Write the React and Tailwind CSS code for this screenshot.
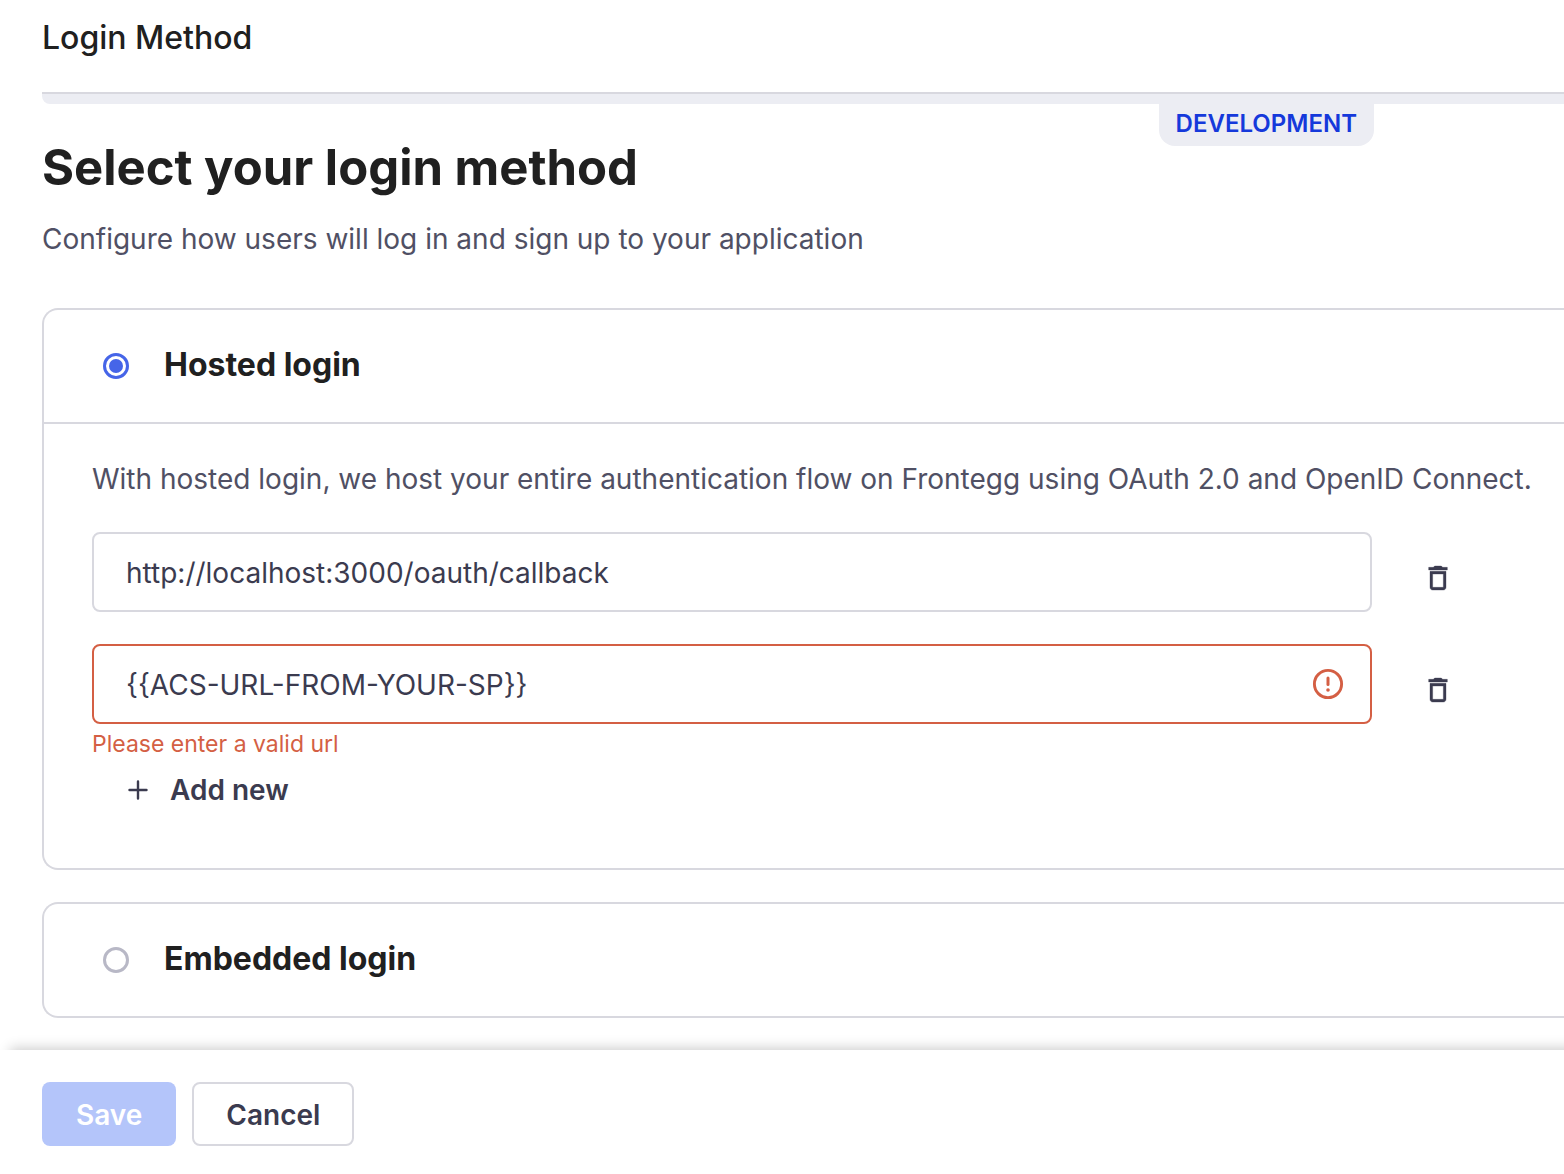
import React, { useState } from "react";

function TrashIcon() {
  return (
    <svg className="size-8" viewBox="0 0 24 24" fill="currentColor" stroke="currentColor" strokeWidth="0.25" aria-hidden="true">
      <path d="M16 9v10H8V9h8m-1.5-6h-5l-1 1H5v2h14V4h-3.5l-1-1zM18 7H6v12c0 1.1.9 2 2 2h8c1.1 0 2-.9 2-2V7z" />
    </svg>
  );
}

function AlertIcon() {
  return (
    <svg className="size-8" viewBox="0 0 32 32" fill="none" stroke="currentColor" aria-hidden="true">
      <circle cx="16" cy="16" r="13.6" strokeWidth="2.9" />
      <path d="M16 10v6.4" strokeWidth="3" strokeLinecap="round" />
      <circle cx="16" cy="22" r="1.8" fill="currentColor" stroke="none" />
    </svg>
  );
}

function PlusIcon() {
  return (
    <svg className="size-5" viewBox="0 0 20 20" fill="none" stroke="currentColor" aria-hidden="true">
      <path d="M10 1.5v17M1.5 10h17" strokeWidth="2.4" strokeLinecap="round" />
    </svg>
  );
}

function MethodCard({ value, label, selected, onSelect, children }) {
  return (
    <section className="rounded-l-2xl border-2 border-r-0 border-[#d8d8df]">
      <label className="flex h-28 items-center gap-[35px] pl-[59px]">
        <input
          type="radio"
          name="login-method"
          value={value}
          checked={selected}
          onChange={() => onSelect(value)}
          className="size-[26px] appearance-none rounded-full border-[3px] border-[#b8b8c6] bg-clip-content p-[3px] checked:border-[#4665e8] checked:bg-[#4665e8]"
        />
        <span className="pb-0.5 text-[32px] leading-10 font-bold text-[#202020]">{label}</span>
      </label>
      {children}
    </section>
  );
}

function UrlRow({ label, value, onChange, error }) {
  return (
    <div>
      <div className="flex items-center pr-[94px]">
        <div className="relative flex-1">
          <input
            type="text"
            aria-label={label}
            aria-invalid={Boolean(error)}
            value={value}
            onChange={(e) => onChange(e.target.value)}
            className={
              "h-20 w-full rounded-lg border-2 bg-white px-8 pt-0.5 text-[28px] text-[#3b3b4f] outline-none " +
              (error ? "border-[#d45f44]" : "border-[#d8d8df]")
            }
          />
          {error && (
            <span className="absolute inset-y-0 right-7 flex items-center text-[#d45f44]">
              <AlertIcon />
            </span>
          )}
        </div>
        <button
          type="button"
          aria-label="Delete URL"
          className="ml-[34px] flex h-20 w-16 items-center justify-center pt-3 text-[#3b3b4f]"
        >
          <TrashIcon />
        </button>
      </div>
      {error && <p className="pt-0.5 text-[23px] leading-9 text-[#d45f44]">{error}</p>}
    </div>
  );
}

export default function App() {
  const [method, setMethod] = useState("hosted");
  const [first, setFirst] = useState("http://localhost:3000/oauth/callback");
  const [second, setSecond] = useState("{{ACS-URL-FROM-YOUR-SP}}");

  return (
    <div className="flex min-h-screen flex-col overflow-x-hidden bg-white font-[Inter,sans-serif] text-[#202020]">
      <main className="flex-1 pl-[42px]">
        <header className="pt-[18px] pb-[34px]">
          <p className="text-[32px] leading-10 font-medium">Login Method</p>
        </header>
        <div className="relative h-3 rounded-bl-lg border-t-2 border-[#d8d8df] bg-[#ecedf3]">
          <span className="absolute top-0 right-[190px] rounded-b-2xl bg-[#ecedf3] px-[17px] pt-3 pb-1 text-2xl leading-9 font-semibold text-[#1539db]">
            DEVELOPMENT
          </span>
        </div>

        <h1 className="pt-8 text-[49px] leading-[64px] font-bold">Select your login method</h1>
        <p className="mt-[19px] mb-[49px] text-[28px] leading-10 text-[#505064]">
          Configure how users will log in and sign up to your application
        </p>

        <div className="flex flex-col gap-8 pb-8">
          <MethodCard value="hosted" label="Hosted login" selected={method === "hosted"} onSelect={setMethod}>
            <div className="border-t-2 border-[#d8d8df] pt-[35px] pb-[58px] pl-12">
              <p className="text-[28px] leading-10 whitespace-nowrap text-[#505064]">
                With hosted login, we host your entire authentication flow on Frontegg using OAuth 2.0 and OpenID Connect.
              </p>
              <div className="mt-[33px] flex flex-col gap-8">
                <UrlRow label="Redirect URL 1" value={first} onChange={setFirst} />
                <UrlRow
                  label="Redirect URL 2"
                  value={second}
                  onChange={setSecond}
                  error="Please enter a valid url"
                />
              </div>
              <button
                type="button"
                className="mt-2 ml-9 flex items-center gap-[22px] text-[28px] leading-10 font-semibold text-[#3b3b4f]"
              >
                <PlusIcon />
                Add new
              </button>
            </div>
          </MethodCard>
          <MethodCard value="embedded" label="Embedded login" selected={method === "embedded"} onSelect={setMethod} />
        </div>
      </main>

      <footer className="-mr-10 flex gap-4 bg-white pt-8 pb-7 pl-[42px] shadow-[0_-12px_12px_-10px_rgba(0,0,0,0.2)]">
        <button
          type="button"
          disabled
          className="h-16 rounded-lg bg-[#b4c5fa] px-[34px] pt-0.5 text-[28px] font-semibold text-white"
        >
          Save
        </button>
        <button
          type="button"
          className="h-16 rounded-lg border-2 border-[#d8d8df] px-8 pt-0.5 text-[28px] font-semibold text-[#3b3b4f]"
        >
          Cancel
        </button>
      </footer>
    </div>
  );
}
